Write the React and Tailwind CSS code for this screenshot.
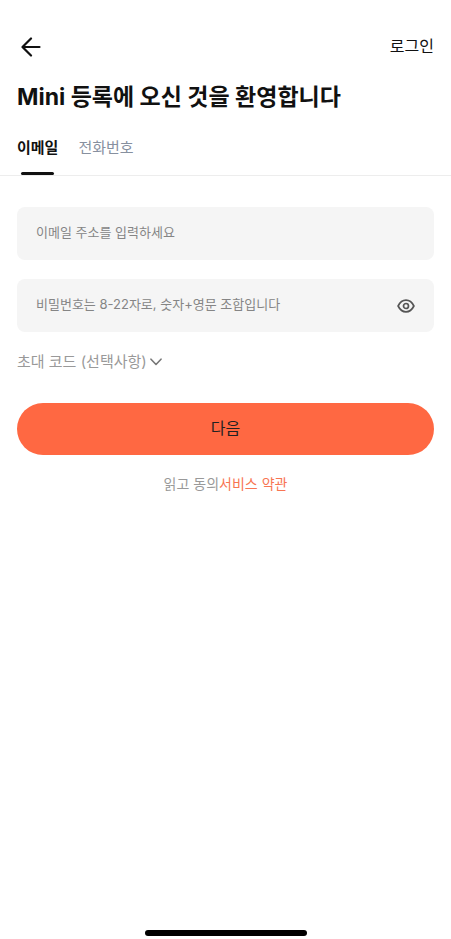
import { useState } from "react";

function BackIcon() {
  return (
    <svg width="20" height="20" viewBox="0 0 20 20" fill="none" stroke="currentColor" strokeWidth="2.2" aria-hidden="true">
      <path d="M18.500 10H1.800M10 1.500L1.500 10l8.500 8.500" strokeLinecap="round" strokeLinejoin="round" />
    </svg>
  );
}

function EyeIcon() {
  return (
    <svg width="18" height="14" viewBox="0 0 18 14" fill="none" stroke="currentColor" strokeWidth="1.7" aria-hidden="true">
      <path d="M1.1 7C3 3.2 5.7 1.2 9 1.2S15 3.2 16.9 7C15 10.8 12.3 12.8 9 12.8S3 10.8 1.1 7Z" strokeLinejoin="round" />
      <circle cx="9" cy="7" r="2.5" />
    </svg>
  );
}

function ChevronIcon() {
  return (
    <svg width="12" height="8" viewBox="0 0 12 8" fill="none" stroke="currentColor" strokeWidth="1.6" aria-hidden="true">
      <path d="M1 1.2L6 6.5l5-5.3" strokeLinecap="round" strokeLinejoin="round" />
    </svg>
  );
}

const fieldClass =
  "h-[53px] w-full rounded-lg bg-[#f5f5f5] pl-[19px] pb-[3px] text-[13px] text-[#111] outline-none placeholder:text-[#858585]";

export default function App() {
  const [visible, setVisible] = useState(false);

  return (
    <div className="flex min-h-screen flex-col bg-white pb-[3px] font-['Inter','Noto_Sans_CJK_KR',sans-serif] text-[#111]">
      <header className="mt-[35px] flex h-6 items-center justify-between px-[17px]">
        <button type="button" aria-label="뒤로" className="pl-1">
          <BackIcon />
        </button>
        <a href="#login" className="pb-[2px] text-base leading-6">로그인</a>
      </header>

      <h1 className="mt-5 px-[17px] text-[23px] font-bold leading-9">Mini 등록에 오신 것을 환영합니다</h1>

      <div role="tablist" className="mt-4 flex h-[45px] gap-5 border-b border-[#ededed] px-[17px] text-[15px] leading-[34px]">
        <button type="button" role="tab" aria-selected="true" className="flex flex-col items-center justify-between font-bold">
          이메일
          <span className="h-[3px] w-[33px] rounded-sm bg-[#111]" />
        </button>
        <button type="button" role="tab" aria-selected="false" className="flex flex-col text-[#87909f]">
          전화번호
        </button>
      </div>

      <form className="mt-[31px] px-[17px]" onSubmit={(e) => e.preventDefault()}>
        <input type="email" aria-label="이메일 주소" placeholder="이메일 주소를 입력하세요" className={fieldClass + " pr-5"} />
        <div className="relative mt-[19px]">
          <input
            type={visible ? "text" : "password"}
            aria-label="비밀번호"
            placeholder="비밀번호는 8-22자로, 숫자+영문 조합입니다"
            className={fieldClass + " pr-14"}
          />
          <button
            type="button"
            aria-label="비밀번호 표시"
            onClick={() => setVisible(!visible)}
            className="absolute inset-y-0 right-[19px] flex items-center text-[#555]"
          >
            <EyeIcon />
          </button>
        </div>

        <button type="button" className="mt-[18px] flex h-6 items-center gap-[3px] text-[15px] leading-6 text-[#999]">
          초대 코드 (선택사항)
          <span className="text-[#777]"><ChevronIcon /></span>
        </button>

        <button type="submit" className="mt-[29px] h-[52px] w-full rounded-full bg-[#ff6842] pb-[2px] text-base text-[#222]">
          다음
        </button>
      </form>

      <p className="mt-[17px] text-center text-sm leading-6 text-[#999]">
        읽고 동의<a href="#terms" className="text-[#f87552]">서비스 약관</a>
      </p>

      <div className="mx-auto mt-auto h-[6px] w-[162px] rounded-full bg-black" />
    </div>
  );
}
